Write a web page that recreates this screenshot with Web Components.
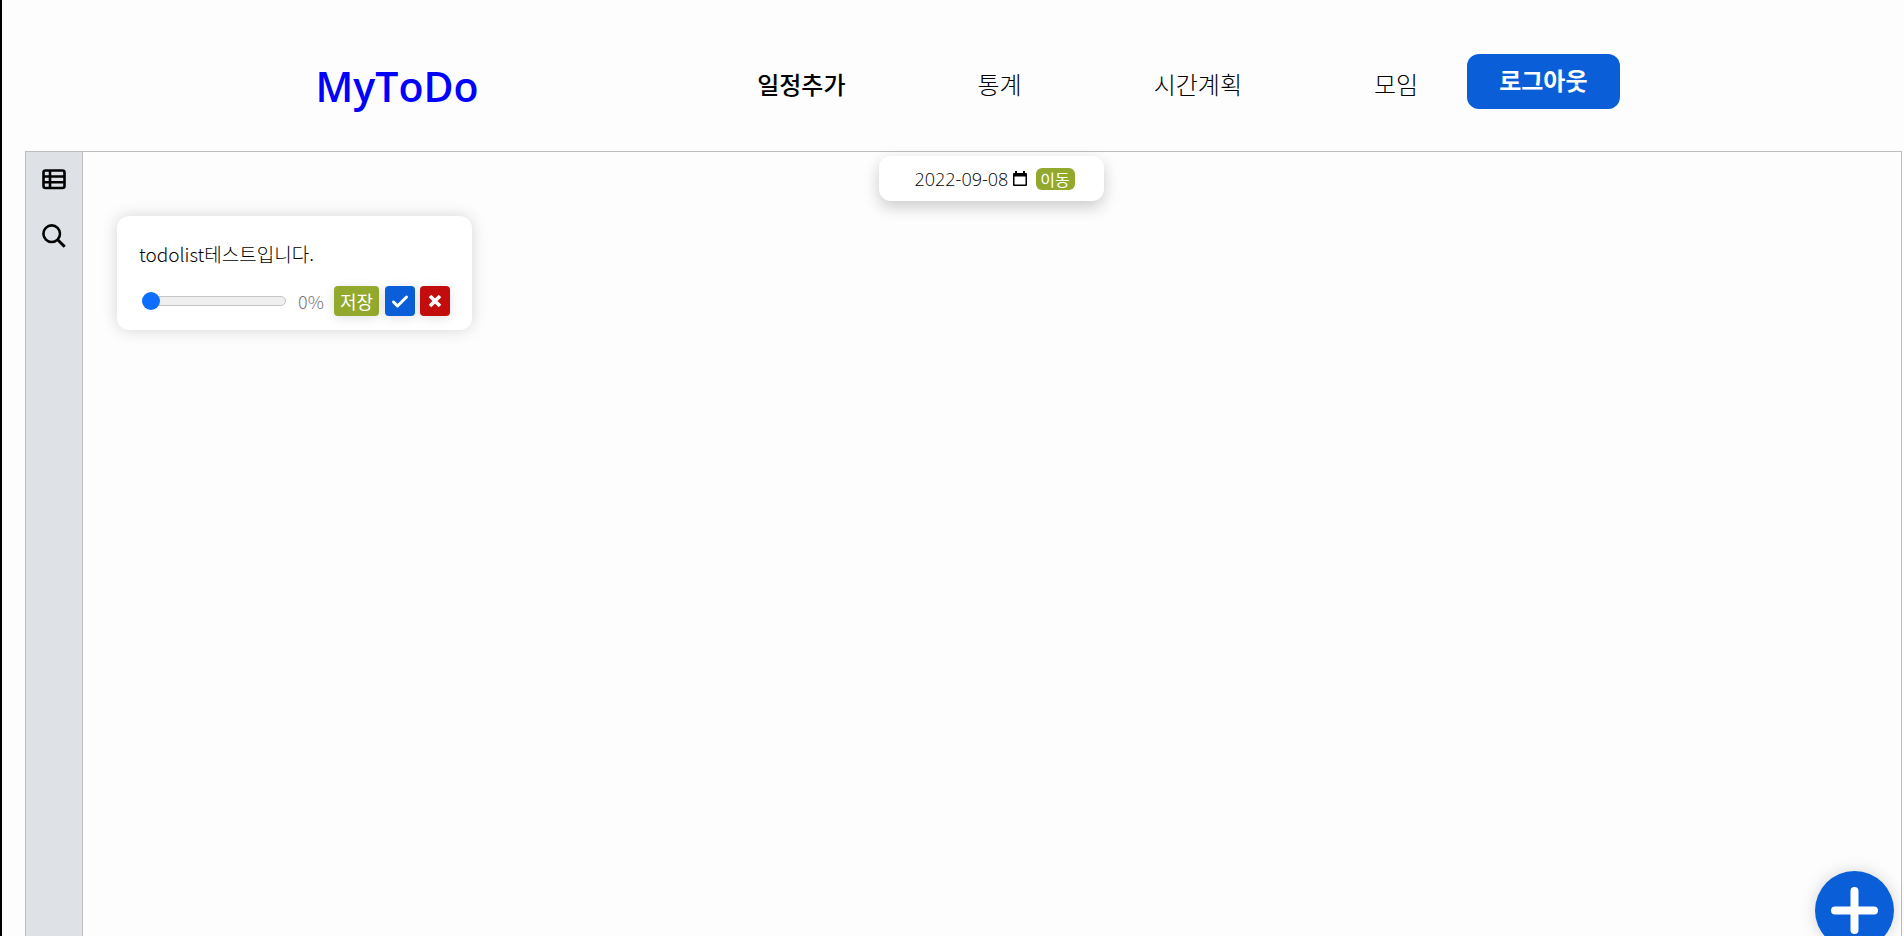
<!DOCTYPE html>
<html lang="ko">
<head>
<meta charset="utf-8">
<meta name="viewport" content="width=device-width, initial-scale=1">
<title>MyToDo</title>
<style>
  :root {
    --blue: #0a5fd8;
    --green: #92a92d;
    --red: #c30d0d;
    --line: #bdbdbd;
    --page: #fdfdfd;
  }

  html {
    height: 100%;
    overflow: hidden;
  }

  body {
    background: var( --page );
    border-left: 2px solid #000000;
    box-sizing: border-box;
    color: #000000;
    font-family: 'Noto Sans CJK KR', sans-serif;
    font-size: 18px;
    font-weight: 300;
    height: 100%;
    margin: 0;
  }
</style>
</head>
<body>

<todo-app>
  <todo-header slot="header">
    <todo-link active>일정추가</todo-link>
    <todo-link>통계</todo-link>
    <todo-link>시간계획</todo-link>
    <todo-link>모임</todo-link>
  </todo-header>
  <todo-sidebar slot="sidebar"></todo-sidebar>
  <todo-date value="2022-09-08"></todo-date>
  <todo-card value="0">todolist테스트입니다.</todo-card>
  <todo-add slot="action"></todo-add>
</todo-app>

<script>
// Shared by the elements below
class TodoElement extends HTMLElement {
  constructor() {
    super();

    const template = document.createElement( 'template' );
    template.innerHTML = this.constructor.template;

    this.attachShadow( {mode: 'open'} );
    this.shadowRoot.appendChild( template.content.cloneNode( true ) );
  }
}

// Page frame
class TodoApp extends TodoElement {
  static get template() {
    return /* template */ `
      <style>
        :host {
          box-sizing: border-box;
          display: flex;
          flex-direction: column;
          height: 100%;
          padding: 0 2px 0 23px;
        }

        .body {
          border: 1px solid var( --line );
          border-bottom: none;
          display: flex;
          flex-grow: 1;
        }

        main {
          align-items: flex-start;
          display: flex;
          flex-direction: column;
          flex-grow: 1;
          padding: 4px 0 0 0;
        }
      </style>
      <slot name="header"></slot>
      <div class="body">
        <slot name="sidebar"></slot>
        <main><slot></slot></main>
      </div>
      <slot name="action"></slot>
    `;
  }
}

class TodoHeader extends TodoElement {
  static get template() {
    return /* template */ `
      <style>
        :host {
          box-sizing: border-box;
          display: block;
          padding: 54px 0 33px 8px;
        }

        header {
          align-items: flex-start;
          display: flex;
          justify-content: space-between;
          margin: 0 auto;
          max-width: 1304px;
        }

        .logo {
          color: #0000ff;
          font-family: 'Open Sans', sans-serif;
          font-size: 41px;
          font-weight: 600;
          line-height: 64px;
          text-decoration: none;
        }

        nav {
          align-items: flex-start;
          display: flex;
        }

        .links {
          display: flex;
          gap: 132px;
          margin-right: 49px;
        }

        button {
          background: var( --blue );
          border: none;
          border-radius: 12px;
          color: #ffffff;
          cursor: pointer;
          font-family: inherit;
          font-size: 24px;
          font-weight: 700;
          height: 55px;
          line-height: 48px;
          padding: 0 32px 4px 32px;
        }
      </style>
      <header>
        <a class="logo" href="#">MyToDo</a>
        <nav>
          <div class="links"><slot></slot></div>
          <button type="button">로그아웃</button>
        </nav>
      </header>
    `;
  }
}

class TodoLink extends TodoElement {
  static get template() {
    return /* template */ `
      <style>
        :host {
          display: block;
        }

        a {
          color: inherit;
          display: block;
          font-size: 24px;
          line-height: 60px;
          text-decoration: none;
          white-space: nowrap;
        }

        :host( [active] ) a {
          font-weight: 500;
        }
      </style>
      <a href="#"><slot></slot></a>
    `;
  }
}

class TodoSidebar extends TodoElement {
  static get template() {
    return /* template */ `
      <style>
        :host {
          align-items: center;
          background: #dee2e6;
          border-right: 1px solid var( --line );
          display: flex;
          flex-direction: column;
          flex-shrink: 0;
          gap: 32px;
          padding: 16px 0 0 0;
          width: 56px;
        }

        button {
          background: none;
          border: none;
          color: #000000;
          cursor: pointer;
          height: 24px;
          padding: 0;
          width: 24px;
        }

        svg {
          display: block;
        }
      </style>
      <button type="button" aria-label="목록">
        <svg width="24" height="24" viewBox="0 0 24 24" fill="none" stroke="currentColor" stroke-width="2.6">
          <rect x="1.5" y="2.5" width="21" height="17.5" rx="2"/>
          <path d="M1.5 8.5h21M1.5 14.2h21M8 2.5v17.5"/>
        </svg>
      </button>
      <button type="button" aria-label="검색">
        <svg width="24" height="24" viewBox="0 0 24 24" fill="none" stroke="currentColor" stroke-width="2.6">
          <circle cx="9.7" cy="9.7" r="8.3"/>
          <path d="M15.7 15.7l7 7" stroke-width="3"/>
        </svg>
      </button>
    `;
  }
}

class TodoDate extends TodoElement {
  static get template() {
    return /* template */ `
      <style>
        :host {
          align-items: center;
          align-self: center;
          background: #ffffff;
          border-radius: 12px;
          box-shadow: 0 6px 16px rgba( 0, 0, 0, 0.2 );
          box-sizing: border-box;
          display: flex;
          height: 45px;
          margin-right: 2px;
          padding: 0 29px 0 36px;
        }

        input {
          background: none;
          border: none;
          color: inherit;
          font-family: 'Open Sans', sans-serif;
          font-size: 18px;
          font-weight: 300;
          height: 26px;
          padding: 0;
          width: 98px;
        }

        button {
          border: none;
          cursor: pointer;
          font-family: inherit;
          padding: 0;
        }

        .picker {
          background: none;
          height: 16px;
          width: 14px;
        }

        .move {
          background: var( --green );
          border-radius: 6px;
          color: #ffffff;
          font-size: 16px;
          font-weight: 400;
          height: 22px;
          line-height: 20px;
          margin-left: 9px;
          width: 39px;
        }

        svg {
          display: block;
        }
      </style>
      <input type="text" aria-label="날짜">
      <button class="picker" type="button" aria-label="달력">
        <svg width="14" height="16" viewBox="0 0 14 16">
          <path d="M2 0h2v2h6V0h2v2h1q1 0 1 1v11q0 1-1 1H1q-1 0-1-1V3q0-1 1-1h1zM1.5 5.5v8h11v-8z" fill="#000" fill-rule="evenodd"/>
        </svg>
      </button>
      <button class="move" type="button">이동</button>
    `;
  }

  connectedCallback() {
    this.shadowRoot.querySelector( 'input' ).value = this.getAttribute( 'value' );
  }
}

class TodoCard extends TodoElement {
  static get template() {
    return /* template */ `
      <style>
        :host {
          background: #ffffff;
          border-radius: 12px;
          box-shadow: 0 0 16px rgba( 0, 0, 0, 0.16 );
          box-sizing: border-box;
          display: block;
          margin: 15px 0 0 34px;
          padding: 24px 22px 14px 22px;
          width: 355px;
        }

        p {
          font-size: 19px;
          line-height: 28px;
          margin: 0 0 18px 0;
        }

        .row {
          align-items: center;
          display: flex;
        }

        input {
          appearance: none;
          background: none;
          flex-grow: 1;
          height: 18px;
          margin: 0 12px 0 3px;
          min-width: 0;
        }

        input::-webkit-slider-runnable-track {
          background: #efefef;
          border: 1px solid #c4c4c4;
          border-radius: 5px;
          box-sizing: border-box;
          height: 10px;
        }

        input::-webkit-slider-thumb {
          appearance: none;
          background: #0d6efd;
          border-radius: 9px;
          height: 18px;
          margin: -5px 0 0 -1px;
          width: 18px;
        }

        output {
          color: #777777;
          line-height: 30px;
          width: 36px;
        }

        button {
          border: none;
          border-radius: 4px;
          box-shadow: 0 2px 12px rgba( 0, 0, 0, 0.12 );
          color: #ffffff;
          cursor: pointer;
          flex-shrink: 0;
          font-family: inherit;
          font-size: 18px;
          height: 30px;
          line-height: 28px;
          padding: 0;
          width: 30px;
        }

        .save {
          background: var( --green );
          font-weight: 400;
          width: 45px;
        }

        .done {
          background: var( --blue );
          margin: 0 5px 0 6px;
        }

        .remove {
          background: var( --red );
        }

        svg {
          display: block;
          margin: 0 auto;
        }
      </style>
      <p><slot></slot></p>
      <div class="row">
        <input type="range" min="0" max="100" aria-label="진행률">
        <output></output>
        <button class="save" type="button">저장</button>
        <button class="done" type="button" aria-label="완료">
          <svg width="18" height="18" viewBox="0 0 18 18" fill="none" stroke="#fff" stroke-width="3" stroke-linecap="round" stroke-linejoin="round">
            <path d="M2.5 10l4 4 9-9"/>
          </svg>
        </button>
        <button class="remove" type="button" aria-label="삭제">
          <svg width="18" height="18" viewBox="0 0 18 18" fill="none" stroke="#fff" stroke-width="3.6">
            <path d="M4 4l10 10M14 4L4 14"/>
          </svg>
        </button>
      </div>
    `;
  }

  constructor() {
    super();

    this.$range = this.shadowRoot.querySelector( 'input' );
    this.$range.addEventListener( 'input', () => this._render() );
  }

  _render() {
    this.shadowRoot.querySelector( 'output' ).innerText = this.$range.value + '%';
  }

  connectedCallback() {
    this.$range.value = this.getAttribute( 'value' );
    this._render();
  }
}

// Floating button, partly below the window's edge
class TodoAdd extends TodoElement {
  static get template() {
    return /* template */ `
      <style>
        :host {
          bottom: -14px;
          display: block;
          position: fixed;
          right: 10px;
        }

        button {
          background: var( --blue );
          border: none;
          border-radius: 50%;
          box-shadow: 0 0 16px rgba( 0, 0, 0, 0.16 );
          cursor: pointer;
          display: block;
          height: 79px;
          padding: 0;
          width: 79px;
        }

        svg {
          display: block;
          margin: 0 auto;
        }
      </style>
      <button type="button" aria-label="추가">
        <svg width="47" height="47" viewBox="0 0 47 47" stroke="#fff" stroke-width="8" stroke-linecap="round">
          <path d="M23.5 4v39M4 23.5h39"/>
        </svg>
      </button>
    `;
  }
}

window.customElements.define( 'todo-app', TodoApp );
window.customElements.define( 'todo-header', TodoHeader );
window.customElements.define( 'todo-link', TodoLink );
window.customElements.define( 'todo-sidebar', TodoSidebar );
window.customElements.define( 'todo-date', TodoDate );
window.customElements.define( 'todo-card', TodoCard );
window.customElements.define( 'todo-add', TodoAdd );
</script>
</body>
</html>
